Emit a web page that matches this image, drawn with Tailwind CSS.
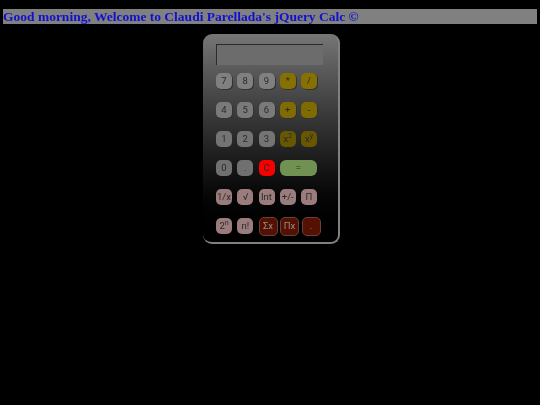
<!DOCTYPE html>
<html lang="en">
<head>
  <meta charset="UTF-8" />
  <title>jQuery Calc</title>
  <script src="https://cdn.jsdelivr.net/npm/@tailwindcss/browser@4"></script>
</head>
<body class="bg-black min-h-screen overflow-hidden pt-[9px] px-[3px]">

  <h1 class="bg-[#808080] h-[15px] leading-[15px] text-[13.5px] font-bold text-[#1010d0] font-['Liberation_Serif',serif] blur-[0.3px]">Good morning, Welcome to Claudi Parellada's jQuery Calc ©</h1>

  <div class="w-[137px] h-[210px] mt-[10px] ml-[200px] pt-[10px] pl-[13px] rounded-[9px] border-r-2 border-b-2 border-[#808080] bg-gradient-to-b from-[#767676] to-black font-['Roboto',sans-serif] text-[9.5px] text-[#2a2a2a] blur-[0.4px]">
    <div class="w-[107px] h-[21px] bg-[#6c6c6c] border-t border-l border-[#2a2a2a]"></div>

    <div class="flex flex-col gap-[13px] mt-[8px]">
      <div class="flex gap-[5.25px]">
        <button class="w-[16px] h-[16px] rounded-[5px] bg-[#808080] shadow-[1px_1px_0_#333]">7</button>
        <button class="w-[16px] h-[16px] rounded-[5px] bg-[#808080] shadow-[1px_1px_0_#333]">8</button>
        <button class="w-[16px] h-[16px] rounded-[5px] bg-[#808080] shadow-[1px_1px_0_#333]">9</button>
        <button class="w-[16px] h-[16px] rounded-[5px] bg-[#857000] shadow-[1px_1px_0_#333]">*</button>
        <button class="w-[16px] h-[16px] rounded-[5px] bg-[#857000] shadow-[1px_1px_0_#333]">/</button>
      </div>
      <div class="flex gap-[5.25px]">
        <button class="w-[16px] h-[16px] rounded-[5px] bg-[#7a7a7a] shadow-[1px_1px_0_#333]">4</button>
        <button class="w-[16px] h-[16px] rounded-[5px] bg-[#7a7a7a] shadow-[1px_1px_0_#333]">5</button>
        <button class="w-[16px] h-[16px] rounded-[5px] bg-[#7a7a7a] shadow-[1px_1px_0_#333]">6</button>
        <button class="w-[16px] h-[16px] rounded-[5px] bg-[#806b00] shadow-[1px_1px_0_#333]">+</button>
        <button class="w-[16px] h-[16px] rounded-[5px] bg-[#806b00] shadow-[1px_1px_0_#333]">-</button>
      </div>
      <div class="flex gap-[5.25px]">
        <button class="w-[16px] h-[16px] rounded-[5px] bg-[#747474]">1</button>
        <button class="w-[16px] h-[16px] rounded-[5px] bg-[#747474]">2</button>
        <button class="w-[16px] h-[16px] rounded-[5px] bg-[#747474]">3</button>
        <button class="w-[16px] h-[16px] rounded-[5px] bg-[#675700]">x<sup class="text-[7px]">2</sup></button>
        <button class="w-[16px] h-[16px] rounded-[5px] bg-[#675700]">x<sup class="text-[7px]">y</sup></button>
      </div>
      <div class="flex gap-[5.25px]">
        <button class="w-[16px] h-[16px] rounded-[5px] bg-[#707070]">0</button>
        <button class="w-[16px] h-[16px] rounded-[5px] bg-[#707070]">.</button>
        <button class="w-[16px] h-[16px] rounded-[5px] bg-[#f80000]">C</button>
        <button class="w-[37px] h-[16px] rounded-[6px] bg-[#719152]">=</button>
      </div>
      <div class="flex gap-[5.25px]">
        <button class="w-[16px] h-[16px] rounded-[5px] bg-[#9a7c7c]">1/x</button>
        <button class="w-[16px] h-[16px] rounded-[5px] bg-[#9a7c7c]">√</button>
        <button class="w-[16px] h-[16px] rounded-[5px] bg-[#9a7c7c]">Int</button>
        <button class="w-[16px] h-[16px] rounded-[5px] bg-[#9a7c7c]">+/-</button>
        <button class="w-[16px] h-[16px] rounded-[5px] bg-[#9a7c7c]">Π</button>
      </div>
      <div class="flex gap-[5.25px] h-[16px] items-center">
        <button class="w-[16px] h-[16px] rounded-[5px] bg-[#9a7c7c]">2<sup class="text-[7px]">n</sup></button>
        <button class="w-[16px] h-[16px] rounded-[5px] bg-[#9a7c7c]">n!</button>
        <div class="flex gap-[2.5px]">
          <button class="w-[19px] h-[19px] rounded-[5px] bg-[#541000] border border-[#654338] text-[#9b8e8a]">Σx</button>
          <button class="w-[19px] h-[19px] rounded-[5px] bg-[#541000] border border-[#654338] text-[#9b8e8a]">Πx</button>
          <button class="w-[19px] h-[19px] rounded-[5px] bg-[#541000] border border-[#654338] text-[#9b8e8a]">.</button>
        </div>
      </div>
    </div>
  </div>

</body>
</html>
